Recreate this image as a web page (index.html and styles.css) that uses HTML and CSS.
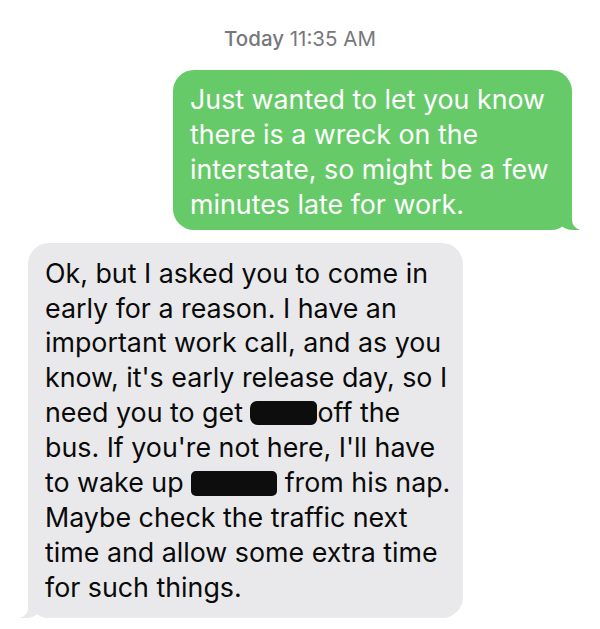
FILE: index.html
```html
<!DOCTYPE html>
<html lang="en">
<head>
<meta charset="utf-8">
<title>Messages</title>
<link rel="stylesheet" href="styles.css">
</head>
<body>
<main class="thread">
  <div class="stamp"><span class="stamp-day">Today</span> 11:35 AM</div>
  <div class="bubble sent">Just wanted to let you know<br>there is a wreck on the<br>interstate, so might be a few<br>minutes late for work.</div>
  <div class="bubble received">Ok, but I asked you to come in<br>early for a reason. I have an<br>important work call, and as you<br>know, it's early release day, so I<br>need you to get <span class="redact redact-a"></span>off the<br>bus. If you're not here, I'll have<br>to wake up <span class="redact redact-b"></span> from his nap.<br>Maybe check the traffic next<br>time and allow some extra time<br>for such things.</div>
</main>
</body>
</html>
```
FILE: styles.css
```css
* { box-sizing: border-box; }
html, body { margin: 0; padding: 0; background: #ffffff; }
body {
  width: 600px;
  height: 629px;
  overflow: hidden;
  font-family: "Inter", "Liberation Sans", sans-serif;
}
.thread {
  display: flex;
  flex-direction: column;
  padding-top: 27px;
}
.stamp {
  align-self: center;
  font-size: 20.5px;
  line-height: 24px;
  color: #77777c;
  margin-bottom: 19px;
}
.stamp-day { font-weight: 500; }
.bubble {
  position: relative;
  font-size: 26.8px;
  line-height: 34.9px;
  border-radius: 21px;
  padding-left: 17px;
  white-space: nowrap;
}
.sent {
  align-self: flex-end;
  margin-right: 28px;
  width: 399px;
  background: #66ca69;
  color: #ffffff;
  padding-top: 12px;
  padding-bottom: 8px;
}
.received {
  align-self: flex-start;
  margin-left: 28px;
  margin-top: 13px;
  width: 435px;
  background: #e9e9eb;
  color: #0a0a0a;
  padding-top: 13px;
  padding-bottom: 13px;
}
.sent::before, .sent::after,
.received::before, .received::after {
  content: "";
  position: absolute;
  bottom: 0;
  height: 22px;
}
.sent::before {
  right: -7px;
  width: 22px;
  background: #66ca69;
  border-bottom-left-radius: 16px 14px;
}
.sent::after {
  right: -26px;
  width: 26px;
  background: #ffffff;
  border-bottom-left-radius: 10px;
}
.received::before {
  left: -8px;
  width: 22px;
  background: #e9e9eb;
  border-bottom-right-radius: 16px 14px;
}
.received::after {
  left: -26px;
  width: 26px;
  background: #ffffff;
  border-bottom-right-radius: 10px;
}
.redact {
  display: inline-block;
  height: 24px;
  background: #0d0d0d;
  border-radius: 7px 5px 6px 8px;
  vertical-align: -3px;
}
.redact-a { width: 67px; }
.redact-b { width: 86px; vertical-align: -4px; height: 25px; border-radius: 5px; }
```
